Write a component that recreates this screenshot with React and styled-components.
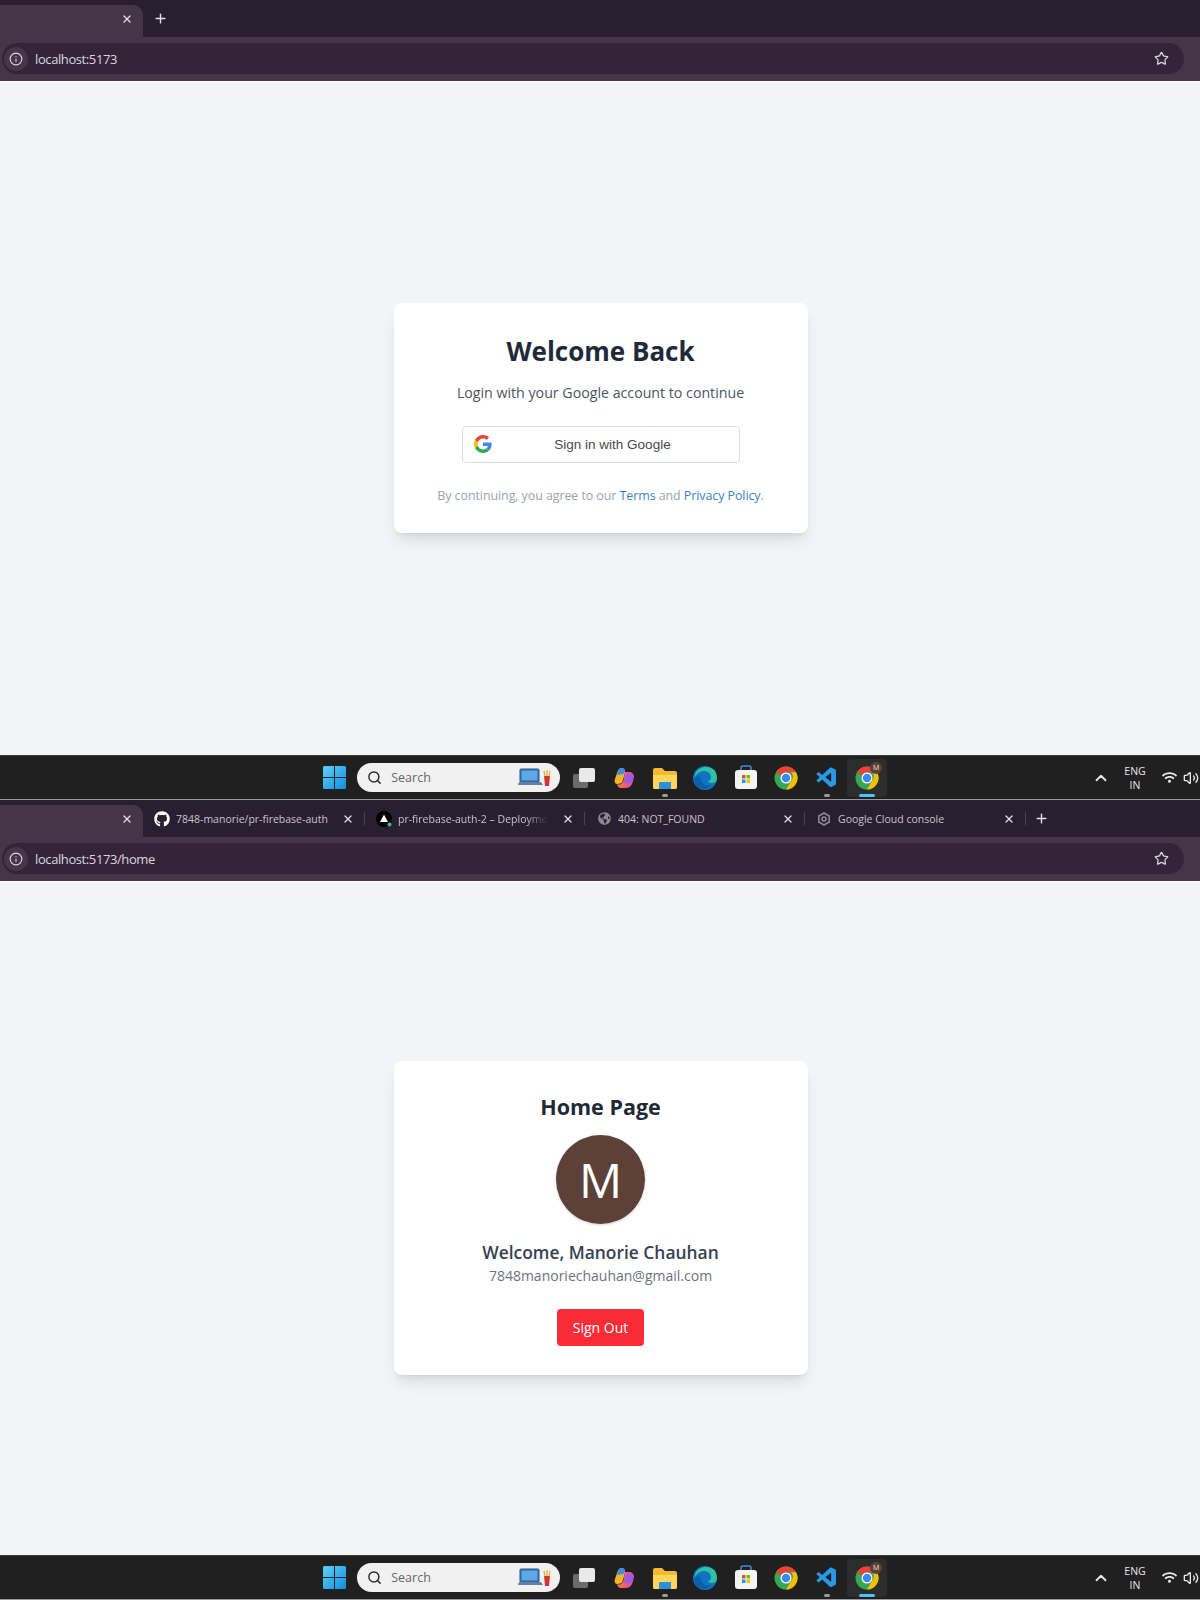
import React from "react";
import styled, { createGlobalStyle } from "styled-components";
import { FaGithub, FaGlobeAmericas, FaWifi } from "react-icons/fa";
import { VscVscode } from "react-icons/vsc";
import { Info, Star, X, Plus, Search as SearchIcon, ChevronUp, Volume2 } from "lucide-react";

const Global = createGlobalStyle`
  html, body { margin: 0; padding: 0; background: #f3f4f6; }
  * { box-sizing: border-box; }
  body { font-family: "Open Sans", "Noto Sans", sans-serif; }
`;

const Screen = styled.section`
  height: 800px;
  display: flex;
  flex-direction: column;
  border-bottom: 1px solid #9a9a9e;
`;
const Chrome = styled.header`
  flex: 0 0 81px;
  background: #443548;
  display: flex;
  flex-direction: column;
`;
const TabStrip = styled.div`
  height: 37px;
  background: #291f30;
  display: flex;
  align-items: flex-end;
  color: #e6e1e8;
`;
const ActiveTab = styled.div`
  width: 143px;
  height: 32px;
  background: #443548;
  border-radius: 0 10px 0 0;
  display: flex;
  align-items: center;
  justify-content: flex-end;
  padding: 0 10px 5px 0;
`;
const NewTab = styled.div`
  display: flex;
  height: 32px;
  align-items: center;
  padding: 0 0 5px ${(p) => p.$pad}px;
`;
const Tab = styled.div`
  width: ${(p) => p.$w}px;
  height: 32px;
  display: flex;
  align-items: center;
  gap: 6px;
  padding: 0 0 5px 11px;
  font-size: 10.5px;
  color: #c9c3cc;
  white-space: nowrap;
  &::after {
    content: "";
    flex: 0 0 1px;
    height: 13px;
    background: #4c4150;
  }
`;
const TabTitle = styled.span`
  flex: 1;
  overflow: hidden;
  ${(p) => p.$fade && "mask-image: linear-gradient(to right, #000 128px, transparent 150px);"}
`;
const Favicon = styled.span`
  flex: 0 0 16px;
  height: 16px;
  display: flex;
  align-items: center;
  justify-content: center;
  color: ${(p) => p.$c || "#fff"};
`;
const CloseBtn = styled.span`
  flex: 0 0 auto;
  display: flex;
  margin-right: 4px;
  color: #e6e1e8;
`;
const Toolbar = styled.div`
  height: 36px;
  padding: 6px 16px 0 2px;
  display: flex;
`;
const AddressBar = styled.div`
  flex: 1;
  height: 31px;
  border-radius: 16px;
  background: #33243a;
  display: flex;
  align-items: center;
  padding: 0 15px 0 2px;
  color: #dcd7de;
  font-size: 13px;
  letter-spacing: -0.4px;
`;
const InfoChip = styled.span`
  width: 24px;
  height: 24px;
  border-radius: 50%;
  background: #443548;
  display: flex;
  align-items: center;
  justify-content: center;
  margin-right: 7px;
`;
const Url = styled.span`
  flex: 1;
`;
const Page = styled.main`
  flex: 1;
  background: #f3f4f6;
  border-top: 1px solid #fff;
  display: flex;
  align-items: center;
  justify-content: center;
`;
const Card = styled.div`
  width: 414px;
  margin-left: 1px;
  margin-bottom: 2px;
  background: #fff;
  border-radius: 8px;
  box-shadow: 0 10px 15px -3px rgba(0, 0, 0, 0.1), 0 4px 6px -4px rgba(0, 0, 0, 0.1);
  display: flex;
  flex-direction: column;
  align-items: center;
`;
const LoginCard = styled(Card)`
  height: 230px;
  padding-top: 30px;
`;
const HomeCard = styled(Card)`
  height: 314px;
  padding-top: 32px;
`;
const Title = styled.h1`
  margin: 0;
  font-size: 26px;
  line-height: 36px;
  font-weight: 700;
  color: #1f2937;
`;
const Subtitle = styled.p`
  margin: 12px 0 0;
  font-size: 14.2px;
  line-height: 24px;
  color: #4b5563;
`;
const GoogleButton = styled.button`
  margin-top: 21px;
  width: 278px;
  height: 37px;
  background: #fff;
  border: 1px solid #dadce0;
  border-radius: 4px;
  display: flex;
  align-items: center;
  padding: 0 11px;
  font-family: "Liberation Sans", Arial, sans-serif;
  font-size: 13.5px;
  color: #47494d;
`;
const GoogleLabel = styled.span`
  flex: 1;
  text-align: center;
  padding-left: 6px;
`;
const Legal = styled.p`
  margin: 21px 0 0;
  font-size: 12.5px;
  line-height: 24px;
  letter-spacing: -0.1px;
  color: #9ca3af;
`;
const LegalLink = styled.a`
  color: #3b82c4;
`;
const HomeTitle = styled.h2`
  margin: 0;
  font-size: 21.5px;
  line-height: 28px;
  font-weight: 700;
  color: #1f2937;
`;
const Avatar = styled.div`
  margin-top: 14px;
  width: 89px;
  height: 89px;
  border-radius: 50%;
  background: #5d4037;
  color: #fff;
  display: flex;
  align-items: center;
  justify-content: center;
  font-family: "Open Sans", sans-serif;
  font-size: 48px;
  box-shadow: 0 1px 3px rgba(0,0,0,0.2);
`;
const UserName = styled.div`
  margin-top: 16px;
  font-size: 17.4px;
  line-height: 25px;
  font-weight: 600;
  color: #374151;
`;
const Email = styled.div`
  font-size: 14px;
  line-height: 22px;
  color: #6b7280;
`;
const SignOut = styled.button`
  margin-top: 22px;
  width: 87px;
  height: 37px;
  border: 0;
  border-radius: 4px;
  background: #fb2c36;
  color: #fff;
  font-family: inherit;
  font-size: 14px;
`;
const Taskbar = styled.footer`
  flex: 0 0 44px;
  background: #202020;
  border-top: 1px solid #3a3a3a;
  display: grid;
  grid-template-columns: 1fr auto 1fr;
  align-items: center;
`;
const TaskCenter = styled.div`
  grid-column: 2;
  display: flex;
  align-items: center;
  margin-left: 1px;
`;
const TaskIcon = styled.div`
  width: 40.5px;
  height: 38px;
  display: flex;
  align-items: center;
  justify-content: center;
  position: relative;
  border-radius: 4px;
  background: ${(p) => (p.$active ? "#2d2d2d" : "transparent")};
  &::after {
    content: "";
    display: ${(p) => (p.$dot ? "block" : "none")};
    position: absolute;
    bottom: 0;
    left: 50%;
    transform: translateX(-50%);
    width: ${(p) => (p.$dot === "wide" ? 16 : 6)}px;
    height: 3px;
    border-radius: 2px;
    background: ${(p) => (p.$dot === "wide" ? "#4cc2ff" : "#9a9a9a")};
  }
`;
const SearchPill = styled.div`
  width: 203px;
  height: 29px;
  margin: 0 3px;
  border-radius: 15px;
  background: #f1f1f1;
  display: flex;
  align-items: center;
  padding: 0 8px 0 10px;
  color: #666;
  font-size: 12.5px;
  gap: 9px;
`;
const SearchLabel = styled.span`
  flex: 1;
`;
const Tray = styled.div`
  grid-column: 3;
  justify-self: end;
  display: flex;
  align-items: center;
  padding-right: 1px;
  color: #e8e8e8;
`;
const Lang = styled.div`
  width: 26px;
  margin: 0 14px 0 12px;
  text-align: center;
  font-size: 10.5px;
  line-height: 14px;
  white-space: nowrap;
`;
const VolumeWrap = styled.span`
  display: flex;
  margin-left: 6px;
`;
const Badge = styled.span`
  position: absolute;
  right: 5px;
  top: 3px;
  width: 12px;
  height: 12px;
  border-radius: 50%;
  background: #5d4037;
  color: #e8e0dd;
  font-size: 7px;
  line-height: 12px;
  text-align: center;
`;

const GoogleG = () => (
  <svg width="18" height="18" viewBox="0 0 48 48">
    <path fill="#EA4335" d="M24 9.5c3.54 0 6.71 1.22 9.21 3.6l6.85-6.85C35.9 2.38 30.47 0 24 0 14.62 0 6.51 5.38 2.56 13.22l7.98 6.19C12.43 13.72 17.74 9.5 24 9.5z" />
    <path fill="#4285F4" d="M46.98 24.55c0-1.57-.15-3.09-.38-4.55H24v9.02h12.94c-.58 2.96-2.26 5.48-4.78 7.18l7.73 6c4.51-4.18 7.09-10.36 7.09-17.65z" />
    <path fill="#FBBC05" d="M10.53 28.59c-.48-1.45-.76-2.99-.76-4.59s.27-3.14.76-4.59l-7.98-6.19C.92 16.46 0 20.12 0 24c0 3.88.92 7.54 2.56 10.78l7.97-6.19z" />
    <path fill="#34A853" d="M24 48c6.48 0 11.93-2.13 15.89-5.81l-7.73-6c-2.15 1.45-4.92 2.3-8.16 2.3-6.26 0-11.57-4.22-13.47-9.91l-7.98 6.19C6.51 42.62 14.62 48 24 48z" />
  </svg>
);
const WindowsLogo = () => (
  <svg width="23" height="23" viewBox="0 0 23 23">
    <defs>
      <linearGradient id="win" x1="0" y1="0" x2="1" y2="1">
        <stop offset="0" stopColor="#5fd0fb" />
        <stop offset="1" stopColor="#0f8fdc" />
      </linearGradient>
    </defs>
    <path fill="url(#win)" d="M0 1.5A1.5 1.5 0 0 1 1.5 0H11v11H0zM12 0h9.5A1.5 1.5 0 0 1 23 1.5V11H12zM0 12h11v11H1.5A1.5 1.5 0 0 1 0 21.5zM12 12h11v9.5a1.5 1.5 0 0 1-1.5 1.5H12z" />
  </svg>
);
const SearchArt = () => (
  <svg width="34" height="22" viewBox="0 0 34 22">
    <rect x="2" y="2" width="19" height="13" rx="1" fill="#3f83cf" stroke="#28517f" strokeWidth="1" />
    <rect x="4" y="4" width="15" height="9" fill="#5fa8e6" />
    <path d="M1 15h22l2 3H0z" fill="#6a7f98" />
    <path d="M26 9h6l-1 10h-4z" fill="#d7333b" />
    <path d="M27 9l-1-5M29 9V3M31 9l1-5" stroke="#e3b341" strokeWidth="1.3" />
  </svg>
);
const TaskView = () => (
  <svg width="24" height="22" viewBox="0 0 24 22">
    <rect x="1" y="7" width="15" height="14" rx="2" fill="#6b6b6b" />
    <rect x="7" y="1" width="16" height="14" rx="2" fill="#e9e9e9" />
  </svg>
);
const Copilot = () => (
  <svg width="22" height="22" viewBox="0 0 22 22">
    <path d="M9 1c-3 0-4 2-5 5L2 12c-1 3 0 5 3 5l4-1 3-10c.6-2-.6-5-3-5z" fill="#f0b429" />
    <path d="M9 1c-2 0-3 1-4 3l-1 4 6-1c2 0 2-4 2-4C11.5 2 10.5 1 9 1z" fill="#3d8be8" />
    <path d="M12 5h4c3 0 5 2 5 5l-1 4c-1 4-3 7-7 7H8c-2 0-3-1-4-3 3 1 5 0 6-3z" fill="#e2559c" />
    <path d="M14 7h3c2 0 4 2 3 5l-1 3c-1 1-3 2-5 1l-3-1z" fill="#9a5bea" />
    <path d="M4 17c3 1 5 0 6-2l3 1c0 3-1 5-3 5H8c-2 0-3-2-4-4z" fill="#f06b4f" />
  </svg>
);
const Folder = () => (
  <svg width="24" height="22" viewBox="0 0 24 22">
    <path d="M0 3a2 2 0 0 1 2-2h7l3 3h10a2 2 0 0 1 2 2v14a2 2 0 0 1-2 2H2a2 2 0 0 1-2-2z" fill="#f5b82e" />
    <path d="M0 8h24v12a2 2 0 0 1-2 2H2a2 2 0 0 1-2-2z" fill="#ffd65c" />
    <rect x="6" y="15" width="12" height="7" fill="#2d8fd5" />
  </svg>
);
const Edge = () => (
  <svg width="24" height="24" viewBox="0 0 24 24">
    <circle cx="12" cy="12" r="12" fill="#1173c4" />
    <path d="M2 8C5 1 14-1 20 3c3 2 4 6 4 10 0 2-2 4-5 4-2 0-4-1-4-2 2 0 3-2 3-4 0-3-3-6-7-6S4 7 2 11z" fill="#2fc2a0" />
    <path d="M8 13c0 4 4 7 8 6 1 0 2 0 3-1-2 3-5 5-8 5-5 0-10-4-10-10 3-4 6-4 7 0z" fill="#0d5fae" />
  </svg>
);
const Store = () => (
  <svg width="24" height="25" viewBox="0 0 24 25">
    <path d="M7 6V3c0-1.5 1-2 2-2h6c1 0 2 .5 2 2v3" fill="none" stroke="#3b8ede" strokeWidth="1.5" />
    <rect x="1" y="5" width="22" height="19" rx="3" fill="#f4f4f4" />
    <rect x="8" y="10" width="3.5" height="3.5" fill="#f25022" />
    <rect x="12.5" y="10" width="3.5" height="3.5" fill="#7fba00" />
    <rect x="8" y="14.5" width="3.5" height="3.5" fill="#00a4ef" />
    <rect x="12.5" y="14.5" width="3.5" height="3.5" fill="#ffb900" />
  </svg>
);
const ChromeLogo = () => (
  <svg width="24" height="24" viewBox="0 0 48 48">
    <circle cx="24" cy="24" r="23" fill="#34A853" />
    <path fill="#EA4335" d="M24 1a23 23 0 0 1 20 11.5H24a11.5 11.5 0 0 0-10 5.8L4.100 12.5A23 23 0 0 1 24 1z" />
    <path fill="#FBBC05" d="M44 12.5A23 23 0 0 1 24 47l10-17.200a11.5 11.5 0 0 0 0-17.300z" />
    <circle cx="24" cy="24" r="11" fill="#fff" />
    <circle cx="24" cy="24" r="8.5" fill="#4285F4" />
  </svg>
);
const VercelIcon = () => (
  <svg width="16" height="16" viewBox="0 0 16 16">
    <circle cx="8" cy="8" r="8" fill="#000" />
    <path d="M8 3.5l4 7.5H4z" fill="#fff" />
    <circle cx="13.5" cy="13.5" r="2" fill="#3fb68b" />
  </svg>
);
const CloudIcon = () => (
  <svg width="14" height="14" viewBox="0 0 14 14" fill="none" stroke="#8d8791" strokeWidth="1.6">
    <path d="M7 1l5.2 3v6L7 13l-5.2-3V4z" />
    <circle cx="7" cy="7" r="2" />
  </svg>
);

const TabClose = () => (
  <CloseBtn>
    <X size={12} strokeWidth={2.6} />
  </CloseBtn>
);

const StripRow = ({ full }) => (
  <TabStrip>
    <ActiveTab>
      <X size={12} strokeWidth={2.6} />
    </ActiveTab>
    {full && (
      <>
        <Tab $w={222}>
          <Favicon><FaGithub size={16} /></Favicon>
          <TabTitle>7848-manorie/pr-firebase-auth</TabTitle>
          <TabClose />
        </Tab>
        <Tab $w={220}>
          <Favicon><VercelIcon /></Favicon>
          <TabTitle $fade>pr-firebase-auth-2 – Deployme</TabTitle>
          <TabClose />
        </Tab>
        <Tab $w={220}>
          <Favicon $c="#8d8791"><FaGlobeAmericas size={13} /></Favicon>
          <TabTitle>404: NOT_FOUND</TabTitle>
          <TabClose />
        </Tab>
        <Tab $w={221}>
          <Favicon><CloudIcon /></Favicon>
          <TabTitle>Google Cloud console</TabTitle>
          <TabClose />
        </Tab>
      </>
    )}
    <NewTab $pad={full ? 8 : 10}>
      <Plus size={15} strokeWidth={2.2} />
    </NewTab>
  </TabStrip>
);

const Browser = ({ url, full }) => (
  <Chrome>
    <StripRow full={full} />
    <Toolbar>
      <AddressBar>
        <InfoChip><Info size={14} /></InfoChip>
        <Url>{url}</Url>
        <Star size={15} />
      </AddressBar>
    </Toolbar>
  </Chrome>
);

const WinBar = () => (
  <Taskbar>
    <TaskCenter>
      <TaskIcon><WindowsLogo /></TaskIcon>
      <SearchPill>
        <SearchIcon size={15} color="#333" strokeWidth={2.4} />
        <SearchLabel>Search</SearchLabel>
        <SearchArt />
      </SearchPill>
      <TaskIcon><TaskView /></TaskIcon>
      <TaskIcon><Copilot /></TaskIcon>
      <TaskIcon $dot="small"><Folder /></TaskIcon>
      <TaskIcon><Edge /></TaskIcon>
      <TaskIcon><Store /></TaskIcon>
      <TaskIcon><ChromeLogo /></TaskIcon>
      <TaskIcon $dot="small"><VscVscode size={24} color="#2a97e8" /></TaskIcon>
      <TaskIcon $active $dot="wide">
        <ChromeLogo />
        <Badge>M</Badge>
      </TaskIcon>
    </TaskCenter>
    <Tray>
      <ChevronUp size={18} strokeWidth={2.4} />
      <Lang>ENG<br />IN</Lang>
      <FaWifi size={15} />
      <VolumeWrap><Volume2 size={16} /></VolumeWrap>
    </Tray>
  </Taskbar>
);

export default function App() {
  return (
    <>
      <Global />
      <Screen>
        <Browser url="localhost:5173" />
        <Page>
          <LoginCard>
            <Title>Welcome Back</Title>
            <Subtitle>Login with your Google account to continue</Subtitle>
            <GoogleButton>
              <GoogleG />
              <GoogleLabel>Sign in with Google</GoogleLabel>
            </GoogleButton>
            <Legal>
              By continuing, you agree to our <LegalLink>Terms</LegalLink> and{" "}
              <LegalLink>Privacy Policy</LegalLink>.
            </Legal>
          </LoginCard>
        </Page>
        <WinBar />
      </Screen>
      <Screen>
        <Browser url="localhost:5173/home" full />
        <Page>
          <HomeCard>
            <HomeTitle>Home Page</HomeTitle>
            <Avatar>M</Avatar>
            <UserName>Welcome, Manorie Chauhan</UserName>
            <Email>7848manoriechauhan@gmail.com</Email>
            <SignOut>Sign Out</SignOut>
          </HomeCard>
        </Page>
        <WinBar />
      </Screen>
    </>
  );
}
